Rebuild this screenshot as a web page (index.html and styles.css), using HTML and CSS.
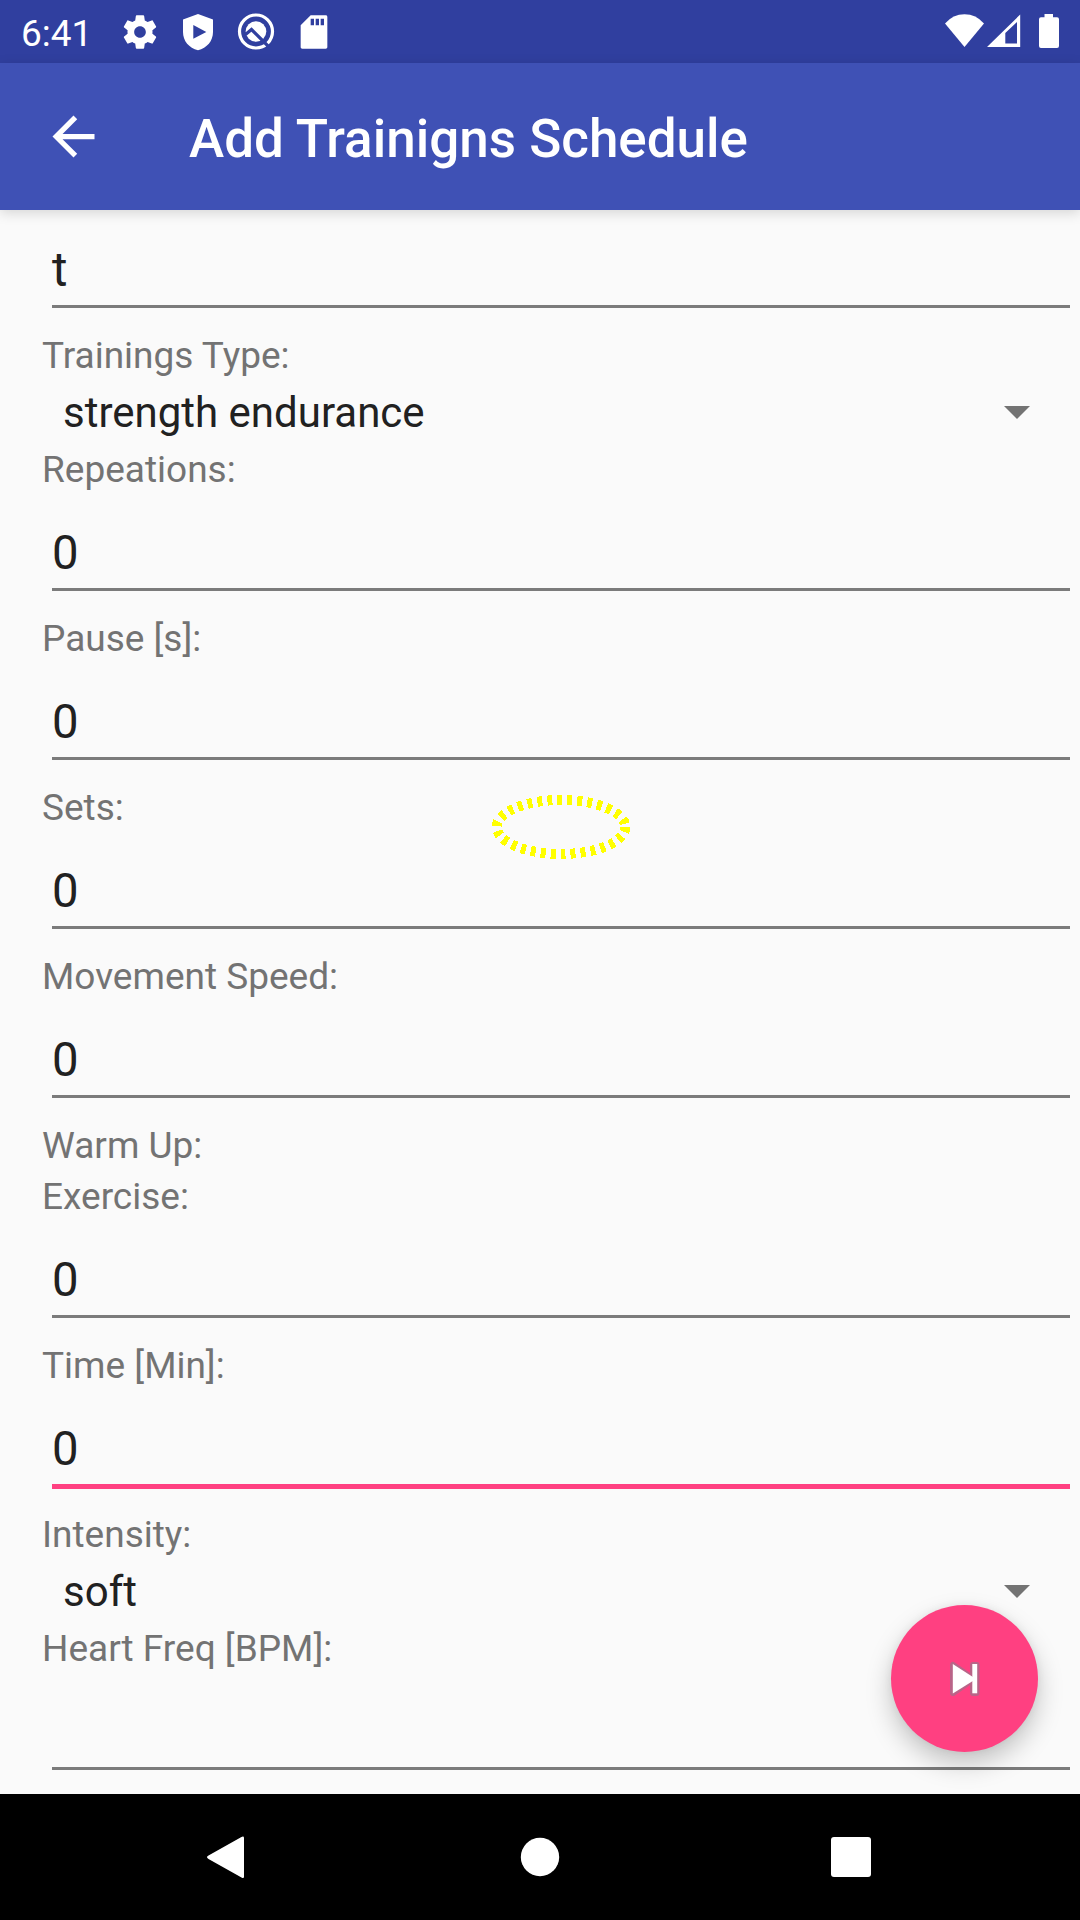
FILE: index.html
```html
<!DOCTYPE html>
<html lang="en">
<head>
<meta charset="utf-8">
<title>Add Trainigns Schedule</title>
<link rel="stylesheet" href="styles.css">
</head>
<body>
<div class="screen">
  <header class="status-bar">
    <span class="clock">6:41</span>
    <div class="notifications">
      <svg class="status-icon" viewBox="0 0 24 24"><path d="M19.43 12.98c.04-.32.07-.64.07-.98s-.03-.66-.07-.98l2.11-1.65c.19-.15.24-.42.12-.64l-2-3.46c-.12-.22-.39-.3-.61-.22l-2.49 1c-.52-.4-1.08-.73-1.69-.98l-.38-2.65C14.46 2.18 14.25 2 14 2h-4c-.25 0-.46.18-.49.42l-.38 2.65c-.61.25-1.17.59-1.69.98l-2.49-1c-.23-.09-.49 0-.61.22l-2 3.46c-.13.22-.07.49.12.64l2.11 1.65c-.04.32-.07.65-.07.98s.03.66.07.98l-2.11 1.65c-.19.15-.24.42-.12.64l2 3.46c.12.22.39.3.61.22l2.49-1c.52.4 1.08.73 1.69.98l.38 2.65c.03.24.24.42.49.42h4c.25 0 .46-.18.49-.42l.38-2.65c.61-.25 1.17-.59 1.69-.98l2.49 1c.23.09.49 0 .61-.22l2-3.46c.12-.22.07-.49-.12-.64l-2.11-1.65zM12 15.5c-1.93 0-3.5-1.57-3.5-3.5s1.57-3.5 3.5-3.5 3.5 1.57 3.5 3.5-1.57 3.5-3.5 3.5z"/></svg>
      <svg class="status-icon" viewBox="0 0 40 40"><path fill-rule="evenodd" d="M20 2 35 7.500V20C35 29 29 36 20 38.300 11 36 5 29 5 20V7.500ZM15.300 13V26.700L28.300 20Z"/></svg>
      <svg class="status-icon" viewBox="0 0 40 40">
        <circle class="ring" cx="20" cy="19.500" r="16.500"/>
        <circle cx="20" cy="19.500" r="10.300"/>
        <path class="cut" d="M9.500 22.500 15.500 17.500 33 35"/>
      </svg>
      <svg class="status-icon" viewBox="0 0 24 24"><path d="M19 2h-9L4 8v13c0 .6.4 1 1 1h14c.6 0 1-.4 1-1V3c0-.6-.4-1-1-1zm-7 6h-2V4h2v4zm3 0h-2V4h2v4zm3 0h-2V4h2v4z"/></svg>
    </div>
    <svg class="system-icons" viewBox="0 0 116 40">
      <path d="M0 11.500Q8 2.300 19.500 2.300T39 11.500L19.500 35Z"/>
      <path fill-rule="evenodd" d="M42 35H75.200V2.500ZM60.300 21V31.500H72V10Z"/>
      <path d="M99.500 2h8.500v3.300h4q2 0 2 2v26.700q0 2-2 2h-16q-2 0-2-2V7.300q0-2 2-2h3.500Z"/>
    </svg>
  </header>

  <div class="app-bar">
    <svg class="back" viewBox="0 0 24 24"><path d="M20 11H7.830l5.590-5.590L12 4l-8 8 8 8 1.410-1.410L7.830 13H20v-2z"/></svg>
    <h1 class="title">Add Trainigns Schedule</h1>
  </div>

  <main class="form">
    <div class="field">t</div>
    <div class="label">Trainings Type:</div>
    <div class="spinner"><span>strength endurance</span><svg class="caret" viewBox="0 0 26 13"><path d="M0 0H26L13 13Z"/></svg></div>
    <div class="label">Repeations:</div>
    <div class="field">0</div>
    <div class="label">Pause [s]:</div>
    <div class="field">0</div>
    <div class="label">Sets:</div>
    <div class="field">0</div>
    <div class="label">Movement Speed:</div>
    <div class="field">0</div>
    <div class="label">Warm Up:</div>
    <div class="label">Exercise:</div>
    <div class="field">0</div>
    <div class="label">Time [Min]:</div>
    <div class="field focused">0</div>
    <div class="label">Intensity:</div>
    <div class="spinner"><span>soft</span><svg class="caret" viewBox="0 0 26 13"><path d="M0 0H26L13 13Z"/></svg></div>
    <div class="label">Heart Freq [BPM]:</div>
    <div class="field"></div>
  </main>

  <nav class="nav-bar">
    <svg class="nav-icon" viewBox="0 0 44 44"><path d="M3.500 20.500 36 2.200Q39 .500 39 3V41.500Q39 44 36.500 42.400L3.500 24Q.500 22.200 3.500 20.500Z"/></svg>
    <svg class="nav-icon" viewBox="0 0 44 44"><circle cx="23" cy="22" r="19.200"/></svg>
    <svg class="nav-icon" viewBox="0 0 44 44"><rect x="2" y="2" width="40" height="40" rx="3"/></svg>
  </nav>

  <svg class="highlight" viewBox="0 0 140 66"><ellipse cx="70" cy="33" rx="64.300" ry="27"/></svg>

  <div class="fab">
    <svg class="skip" viewBox="0 0 32 40">
      <g class="skip-edge"><path d="M4 6V34L23 21V19Z"/><path d="M24 6H27.500V34H24Z"/></g>
      <g class="skip-face"><path d="M3.800 5V34.500L27 20Z"/><path d="M23.300 5H28.200V34.300H23.300Z"/></g>
    </svg>
  </div>
</div>
</body>
</html>
```
FILE: styles.css
```css
* { box-sizing: border-box; }
body { margin: 0; font-family: Roboto, sans-serif; background: #fafafa; }
svg { display: block; fill: #fff; flex: none; }

.screen {
  position: relative;
  width: 1080px;
  height: 1920px;
  overflow: hidden;
  display: flex;
  flex-direction: column;
}

.status-bar {
  flex: none;
  height: 63px;
  padding: 0 19px 0 21px;
  display: flex;
  align-items: center;
  background: #303f9f;
  color: #fff;
}
.clock { width: 99px; padding-top: 3px; font-size: 37px; line-height: 43px; }
.notifications { display: flex; gap: 18px; flex: 1; }
.status-icon { width: 40px; height: 40px; }
.ring { fill: none; stroke: #fff; stroke-width: 3.2; }
.cut { fill: none; stroke: #303f9f; stroke-width: 3.2; }
.system-icons { width: 116px; height: 40px; }

.app-bar {
  flex: none;
  z-index: 1;
  height: 147px;
  padding-left: 42px;
  display: flex;
  align-items: center;
  gap: 84px;
  background: #3f51b5;
  color: #fff;
  box-shadow: 0 3px 12px rgba(0, 0, 0, 0.15);
}
.back { width: 63px; height: 63px; }
.title { margin: 0; padding-top: 4px; font-size: 53px; font-weight: 500; line-height: 62px; }

.form {
  flex: 1;
  min-height: 0;
  overflow: hidden;
  padding: 2px 10px 0 42px;
}
.label { height: 51px; font-size: 37px; line-height: 51px; color: #737373; }
.field {
  height: 96px;
  margin: 0 0 22px 10px;
  padding-top: 30px;
  font-size: 47.25px;
  line-height: 56px;
  color: #212121;
  border-bottom: 3px solid #7b7b7b;
}
.focused { height: 98px; margin-bottom: 20px; border-bottom: 5px solid #ff4081; }
.spinner {
  height: 63px;
  padding: 0 40px 0 21px;
  display: flex;
  align-items: center;
  justify-content: space-between;
  font-size: 42px;
  line-height: 63px;
  color: #212121;
}
.caret { width: 26px; height: 13px; margin-bottom: 1px; fill: #737373; }

.nav-bar {
  flex: none;
  height: 126px;
  padding: 0 207px 0 205px;
  display: flex;
  align-items: center;
  justify-content: space-between;
  background: #000;
}
.nav-icon { width: 44px; height: 44px; }

.highlight { position: absolute; left: 491px; top: 794px; width: 140px; height: 66px; }
.highlight ellipse {
  fill: none;
  stroke: #ff0;
  stroke-width: 10;
  stroke-dasharray: 5 5;
  shape-rendering: crispEdges;
}

.fab {
  position: absolute;
  left: 891px;
  top: 1605px;
  width: 147px;
  height: 147px;
  display: flex;
  align-items: center;
  justify-content: center;
  border-radius: 50%;
  background: #ff4081;
  box-shadow: 0 12px 26px rgba(0, 0, 0, 0.22), 0 0 8px rgba(0, 0, 0, 0.06);
}
.skip { width: 32px; height: 40px; }
.skip-edge { fill: #b96488; stroke: #b96488; stroke-width: 6; stroke-linejoin: round; }
```
